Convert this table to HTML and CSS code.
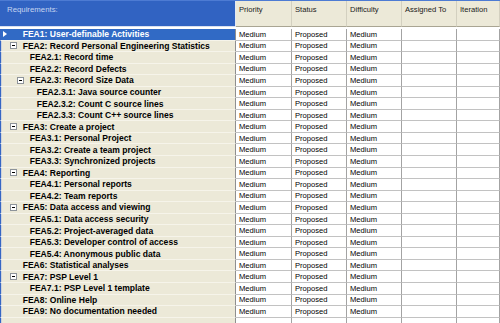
FILE: index.html
```html
<!DOCTYPE html>
<html>
<head>
<meta charset="utf-8">
<link rel="stylesheet" href="styles.css">
</head>
<body>
<div class="grid">
  <div class="head">
    <div class="hreq">Requirements:</div>
    <div class="hcell">Priority</div>
    <div class="hcell">Status</div>
    <div class="hcell">Difficulty</div>
    <div class="hcell">Assigned To</div>
    <div class="hcell">Iteration</div>
  </div>

  <div class="row">
    <div class="tree selected"><span class="sel"><span class="tri"></span></span><span class="exp"></span><span class="label">FEA1: User-definable Activities</span></div>
    <div class="cell">Medium</div><div class="cell">Proposed</div><div class="cell">Medium</div><div class="cell"></div><div class="cell"></div>
  </div>
  <div class="row">
    <div class="tree"><span class="sel"></span><span class="exp"><svg width="7" height="7" viewBox="0 0 7 7"><rect x="0.5" y="0.5" width="6" height="6" fill="#fff" stroke="#8d939a"/><path d="M2 3.5h3" stroke="#000"/></svg></span><span class="label">FEA2: Record Personal Engineering Statistics</span></div>
    <div class="cell">Medium</div><div class="cell">Proposed</div><div class="cell">Medium</div><div class="cell"></div><div class="cell"></div>
  </div>
  <div class="row">
    <div class="tree l1"><span class="sel"></span><span class="exp"></span><span class="label">FEA2.1: Record time</span></div>
    <div class="cell">Medium</div><div class="cell">Proposed</div><div class="cell">Medium</div><div class="cell"></div><div class="cell"></div>
  </div>
  <div class="row">
    <div class="tree l1"><span class="sel"></span><span class="exp"></span><span class="label">FEA2.2: Record Defects</span></div>
    <div class="cell">Medium</div><div class="cell">Proposed</div><div class="cell">Medium</div><div class="cell"></div><div class="cell"></div>
  </div>
  <div class="row">
    <div class="tree l1"><span class="sel"></span><span class="exp"><svg width="7" height="7" viewBox="0 0 7 7"><rect x="0.5" y="0.5" width="6" height="6" fill="#fff" stroke="#8d939a"/><path d="M2 3.5h3" stroke="#000"/></svg></span><span class="label">FEA2.3: Record Size Data</span></div>
    <div class="cell">Medium</div><div class="cell">Proposed</div><div class="cell">Medium</div><div class="cell"></div><div class="cell"></div>
  </div>
  <div class="row">
    <div class="tree l2"><span class="sel"></span><span class="exp"></span><span class="label">FEA2.3.1: Java source counter</span></div>
    <div class="cell">Medium</div><div class="cell">Proposed</div><div class="cell">Medium</div><div class="cell"></div><div class="cell"></div>
  </div>
  <div class="row">
    <div class="tree l2"><span class="sel"></span><span class="exp"></span><span class="label">FEA2.3.2: Count C source lines</span></div>
    <div class="cell">Medium</div><div class="cell">Proposed</div><div class="cell">Medium</div><div class="cell"></div><div class="cell"></div>
  </div>
  <div class="row">
    <div class="tree l2"><span class="sel"></span><span class="exp"></span><span class="label">FEA2.3.3: Count C++ source lines</span></div>
    <div class="cell">Medium</div><div class="cell">Proposed</div><div class="cell">Medium</div><div class="cell"></div><div class="cell"></div>
  </div>
  <div class="row">
    <div class="tree"><span class="sel"></span><span class="exp"><svg width="7" height="7" viewBox="0 0 7 7"><rect x="0.5" y="0.5" width="6" height="6" fill="#fff" stroke="#8d939a"/><path d="M2 3.5h3" stroke="#000"/></svg></span><span class="label">FEA3: Create a project</span></div>
    <div class="cell">Medium</div><div class="cell">Proposed</div><div class="cell">Medium</div><div class="cell"></div><div class="cell"></div>
  </div>
  <div class="row">
    <div class="tree l1"><span class="sel"></span><span class="exp"></span><span class="label">FEA3.1: Personal Project</span></div>
    <div class="cell">Medium</div><div class="cell">Proposed</div><div class="cell">Medium</div><div class="cell"></div><div class="cell"></div>
  </div>
  <div class="row">
    <div class="tree l1"><span class="sel"></span><span class="exp"></span><span class="label">FEA3.2: Create a team project</span></div>
    <div class="cell">Medium</div><div class="cell">Proposed</div><div class="cell">Medium</div><div class="cell"></div><div class="cell"></div>
  </div>
  <div class="row">
    <div class="tree l1"><span class="sel"></span><span class="exp"></span><span class="label">FEA3.3: Synchronized projects</span></div>
    <div class="cell">Medium</div><div class="cell">Proposed</div><div class="cell">Medium</div><div class="cell"></div><div class="cell"></div>
  </div>
  <div class="row">
    <div class="tree"><span class="sel"></span><span class="exp"><svg width="7" height="7" viewBox="0 0 7 7"><rect x="0.5" y="0.5" width="6" height="6" fill="#fff" stroke="#8d939a"/><path d="M2 3.5h3" stroke="#000"/></svg></span><span class="label">FEA4: Reporting</span></div>
    <div class="cell">Medium</div><div class="cell">Proposed</div><div class="cell">Medium</div><div class="cell"></div><div class="cell"></div>
  </div>
  <div class="row">
    <div class="tree l1"><span class="sel"></span><span class="exp"></span><span class="label">FEA4.1: Personal reports</span></div>
    <div class="cell">Medium</div><div class="cell">Proposed</div><div class="cell">Medium</div><div class="cell"></div><div class="cell"></div>
  </div>
  <div class="row">
    <div class="tree l1"><span class="sel"></span><span class="exp"></span><span class="label">FEA4.2: Team reports</span></div>
    <div class="cell">Medium</div><div class="cell">Proposed</div><div class="cell">Medium</div><div class="cell"></div><div class="cell"></div>
  </div>
  <div class="row">
    <div class="tree"><span class="sel"></span><span class="exp"><svg width="7" height="7" viewBox="0 0 7 7"><rect x="0.5" y="0.5" width="6" height="6" fill="#fff" stroke="#8d939a"/><path d="M2 3.5h3" stroke="#000"/></svg></span><span class="label">FEA5: Data access and viewing</span></div>
    <div class="cell">Medium</div><div class="cell">Proposed</div><div class="cell">Medium</div><div class="cell"></div><div class="cell"></div>
  </div>
  <div class="row">
    <div class="tree l1"><span class="sel"></span><span class="exp"></span><span class="label">FEA5.1: Data access security</span></div>
    <div class="cell">Medium</div><div class="cell">Proposed</div><div class="cell">Medium</div><div class="cell"></div><div class="cell"></div>
  </div>
  <div class="row">
    <div class="tree l1"><span class="sel"></span><span class="exp"></span><span class="label">FEA5.2: Project-averaged data</span></div>
    <div class="cell">Medium</div><div class="cell">Proposed</div><div class="cell">Medium</div><div class="cell"></div><div class="cell"></div>
  </div>
  <div class="row">
    <div class="tree l1"><span class="sel"></span><span class="exp"></span><span class="label">FEA5.3: Developer control of access</span></div>
    <div class="cell">Medium</div><div class="cell">Proposed</div><div class="cell">Medium</div><div class="cell"></div><div class="cell"></div>
  </div>
  <div class="row">
    <div class="tree l1"><span class="sel"></span><span class="exp"></span><span class="label">FEA5.4: Anonymous public data</span></div>
    <div class="cell">Medium</div><div class="cell">Proposed</div><div class="cell">Medium</div><div class="cell"></div><div class="cell"></div>
  </div>
  <div class="row">
    <div class="tree"><span class="sel"></span><span class="exp"></span><span class="label">FEA6: Statistical analyses</span></div>
    <div class="cell">Medium</div><div class="cell">Proposed</div><div class="cell">Medium</div><div class="cell"></div><div class="cell"></div>
  </div>
  <div class="row">
    <div class="tree"><span class="sel"></span><span class="exp"><svg width="7" height="7" viewBox="0 0 7 7"><rect x="0.5" y="0.5" width="6" height="6" fill="#fff" stroke="#8d939a"/><path d="M2 3.5h3" stroke="#000"/></svg></span><span class="label">FEA7: PSP Level 1</span></div>
    <div class="cell">Medium</div><div class="cell">Proposed</div><div class="cell">Medium</div><div class="cell"></div><div class="cell"></div>
  </div>
  <div class="row">
    <div class="tree l1"><span class="sel"></span><span class="exp"></span><span class="label">FEA7.1: PSP Level 1 template</span></div>
    <div class="cell">Medium</div><div class="cell">Proposed</div><div class="cell">Medium</div><div class="cell"></div><div class="cell"></div>
  </div>
  <div class="row">
    <div class="tree"><span class="sel"></span><span class="exp"></span><span class="label">FEA8: Online Help</span></div>
    <div class="cell">Medium</div><div class="cell">Proposed</div><div class="cell">Medium</div><div class="cell"></div><div class="cell"></div>
  </div>
  <div class="row">
    <div class="tree"><span class="sel"></span><span class="exp"></span><span class="label">FEA9: No documentation needed</span></div>
    <div class="cell">Medium</div><div class="cell">Proposed</div><div class="cell">Medium</div><div class="cell"></div><div class="cell"></div>
  </div>

  <div class="filler">
    <div class="ftree"></div><div class="fcell"></div><div class="fcell"></div><div class="fcell"></div><div class="fcell"></div><div class="fcell"></div>
  </div>
</div>
</body>
</html>
```
FILE: styles.css
```css
* { box-sizing: border-box; margin: 0; padding: 0; }
html, body { width: 500px; height: 323px; overflow: hidden; background: #fff; }
body { font-family: "Liberation Sans", Arial, sans-serif; color: #000; }

.grid {
  display: flex;
  flex-direction: column;
  height: 323px;
  border-top: 1px solid #4d7bd3;
}

.head, .row, .filler {
  display: grid;
  grid-template-columns: 236px 56px 55px 55px 55px 43px;
}

.head {
  height: 28px;
  padding-bottom: 2px;
  background: #fff;
}

.hreq {
  background: #3163c2;
  color: #c6d5f0;
  font-size: 7.8px;
  padding: 4px 0 0 7px;
  border-bottom: 1px solid #d7dff0;
  border-right: 1px solid #e4e8f2;
}

.hcell {
  background: #ece9d8;
  color: #1a1a1a;
  font-size: 7.6px;
  padding: 4px 0 0 3px;
  border-right: 1px solid #d3d0c0;
  border-bottom: 1px solid #a9a593;
}

.row { height: 11.56px; }

.tree {
  display: flex;
  align-items: center;
  background: #ece9d8;
  border-left: 1px solid #3566c4;
  border-right: 1px solid #8f8f8f;
  border-bottom: 1px solid #f6f4ea;
  box-shadow: inset 1px 0 0 #cfd3dc;
  font-size: 8.55px;
  font-weight: bold;
  white-space: nowrap;
  overflow: hidden;
}
.tree.selected { background: #316ac5; color: #fff; box-shadow: none; }
.tree.l1 { padding-left: 7px; }
.tree.l2 { padding-left: 14px; }

.sel { width: 9px; flex: none; display: flex; align-items: center; }
.tri {
  margin-left: 2px;
  width: 0; height: 0;
  border-left: 4px solid #fff;
  border-top: 3px solid transparent;
  border-bottom: 3px solid transparent;
}
.exp { width: 12.7px; flex: none; display: flex; align-items: center; }
.exp svg { display: block; }

.cell {
  display: flex;
  align-items: center;
  padding-left: 3px;
  font-size: 7.6px;
  white-space: nowrap;
  overflow: hidden;
  border-right: 1px solid #a3a3a3;
  border-bottom: 1px solid #c2c2c2;
}

.filler { flex: 1; }
.ftree {
  background: #ece9d8;
  border-left: 1px solid #3566c4;
  border-right: 1px solid #8f8f8f;
  box-shadow: inset 1px 0 0 #cfd3dc;
}
.fcell { border-right: 1px solid #a3a3a3; }
```
